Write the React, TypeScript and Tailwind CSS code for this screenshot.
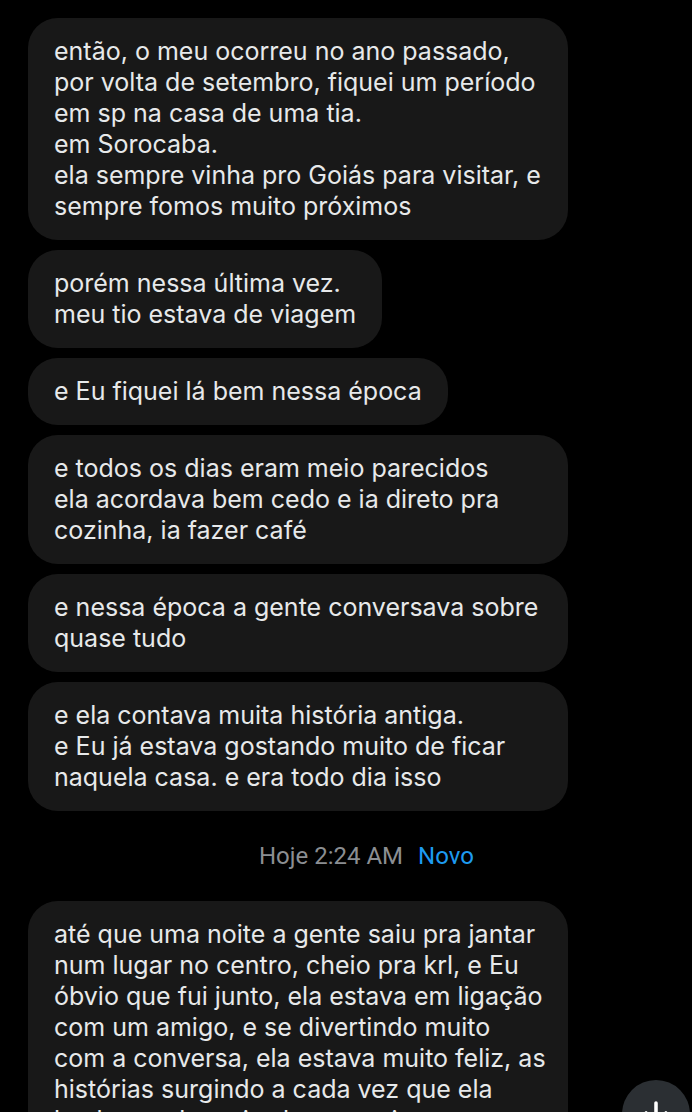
import { ArrowDown } from 'lucide-react'

interface Message {
  id: number
  lines: string[]
  full?: boolean
}

const before: Message[] = [
  {
    id: 1,
    full: true,
    lines: [
      'então, o meu ocorreu no ano passado,',
      'por volta de setembro, fiquei um período',
      'em sp na casa de uma tia.',
      'em Sorocaba.',
      'ela sempre vinha pro Goiás para visitar, e',
      'sempre fomos muito próximos',
    ],
  },
  { id: 2, lines: ['porém nessa última vez.', 'meu tio estava de viagem'] },
  { id: 3, lines: ['e Eu fiquei lá bem nessa época'] },
  {
    id: 4,
    full: true,
    lines: ['e todos os dias eram meio parecidos', 'ela acordava bem cedo e ia direto pra', 'cozinha, ia fazer café'],
  },
  { id: 5, full: true, lines: ['e nessa época a gente conversava sobre', 'quase tudo'] },
  {
    id: 6,
    full: true,
    lines: ['e ela contava muita história antiga.', 'e Eu já estava gostando muito de ficar', 'naquela casa. e era todo dia isso'],
  },
]

const after: Message = {
  id: 7,
  full: true,
  lines: [
    'até que uma noite a gente saiu pra jantar',
    'num lugar no centro, cheio pra krl, e Eu',
    'óbvio que fui junto, ela estava em ligação',
    'com um amigo, e se divertindo muito',
    'com a conversa, ela estava muito feliz, as',
    'histórias surgindo a cada vez que ela',
    'lembrava de mais alguma coisa',
  ],
}

function Bubble({ msg }: { msg: Message }) {
  return (
    <div
      className={`${msg.full ? 'w-[540px]' : 'w-fit'} rounded-[30px] bg-[#181818] px-[26px] py-[18px] text-[25px] leading-[31px] text-[#e7e9ea]`}
    >
      {msg.lines.map((l, i) => (
        <div key={i} className="whitespace-nowrap">{l}</div>
      ))}
    </div>
  )
}

export default function App() {
  return (
    <div className="relative h-[1112px] w-[692px] overflow-hidden bg-black" style={{ fontFamily: 'Inter, "Noto Sans", sans-serif' }}>
      <div className="flex flex-col gap-[10px] pl-[28px] pt-[18px]">
        {before.map((m) => (
          <Bubble key={m.id} msg={m} />
        ))}
        <div className="flex h-[70px] items-center pl-[231px] text-[24px]" style={{ fontFamily: 'Roboto, sans-serif' }}>
          <span className="text-[#8b8e92]">Hoje 2:24 AM</span>
          <span className="ml-[15px] text-[#1d9bf0]">Novo</span>
        </div>
        <Bubble msg={after} />
      </div>
      <button className="absolute left-[622px] top-[1080px] flex h-[68px] w-[68px] items-start justify-center rounded-full bg-[#2b2f33] pt-[16px]">
        <ArrowDown className="h-[34px] w-[34px] text-white" strokeWidth={2.5} />
      </button>
    </div>
  )
}
